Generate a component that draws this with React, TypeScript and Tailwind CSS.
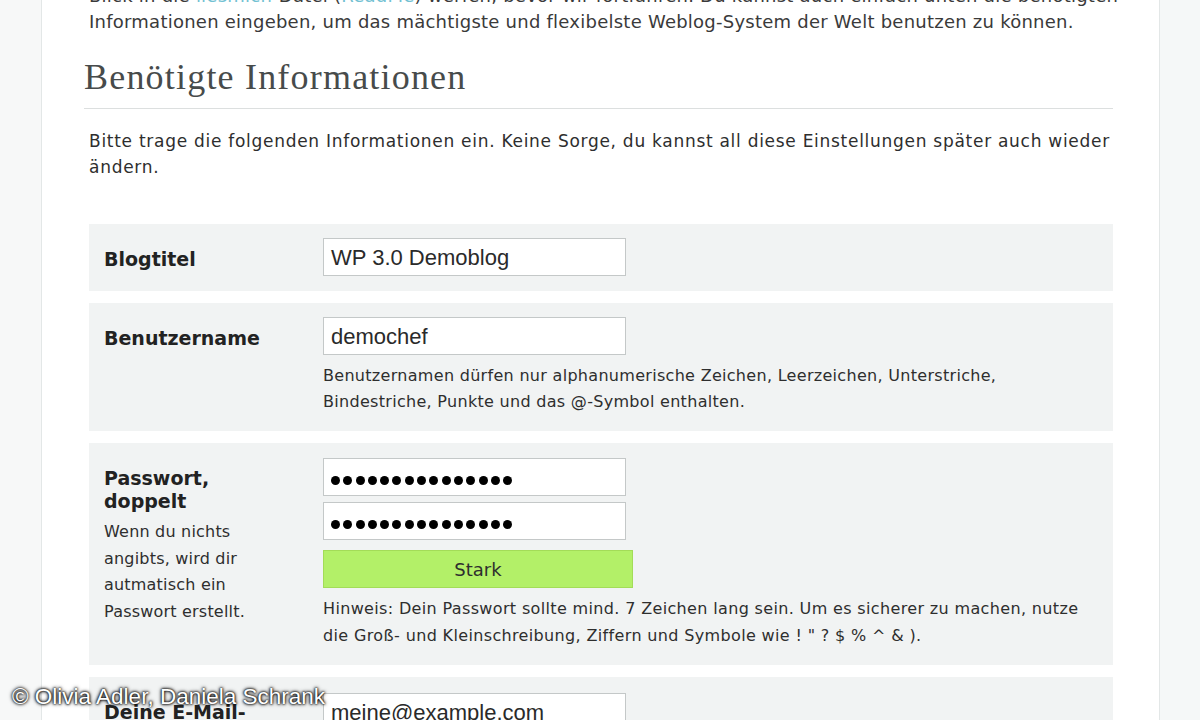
import React from "react";

const Dots = () => (
  <div className="flex items-center gap-[3.3px] pt-[6px]">
    {Array.from({ length: 15 }).map((_, i) => (
      <span key={i} className="block w-[9px] h-[9px] rounded-full bg-black" />
    ))}
  </div>
);

const Input = ({ children }: { children: React.ReactNode }) => (
  <div className="w-[303px] h-[38px] bg-white border border-[#c4c8c8] flex items-center pl-[7px] text-[22px] text-[#2a2a2a] font-['Liberation_Sans',Arial,sans-serif]">
    {children}
  </div>
);

const Label = ({ children }: { children: React.ReactNode }) => (
  <div className="text-[19px] leading-[23px] font-bold text-[#222]">{children}</div>
);

export default function App() {
  return (
    <div className="relative w-[1200px] h-[720px] overflow-hidden flex bg-[#f7f8f8] font-['DejaVu_Sans',Verdana,sans-serif] text-[#333]">
      <div className="w-[41px] shrink-0" />
      <div className="w-[1119px] shrink-0 bg-white border-x border-[#e3e7e7] pl-[42px] pr-[46px] overflow-hidden">
        <p className="mt-[-17px] pl-[5px] text-[18px] leading-[26px] text-[#3a3a3a] tracking-[0.24px] whitespace-nowrap">
          Blick in die <span className="text-[#72c1d2]">liesmich</span>-Datei (<span className="text-[#72c1d2]">ReadMe</span>) werfen, bevor wir fortfahren. Du kannst auch einfach unten die benötigten
          <br />
          Informationen eingeben, um das mächtigste und flexibelste Weblog-System der Welt benutzen zu können.
        </p>
        <h1 className="mt-[20px] pb-[9px] border-b border-[#dcdfdf] font-['Liberation_Serif',Georgia,serif] text-[36px] leading-[44px] tracking-[1.2px] text-[#474b4b]">
          Benötigte Informationen
        </h1>
        <p className="mt-[19px] pl-[5px] text-[17px] leading-[26px] tracking-[0.72px] text-[#2e2e2e]">
          Bitte trage die folgenden Informationen ein. Keine Sorge, du kannst all diese Einstellungen später auch wieder
          ändern.
        </p>
        <div className="mt-[44px] ml-[5px] flex flex-col gap-[12px]">
          {/* Blogtitel */}
          <div className="flex bg-[#f1f3f3]">
            <div className="w-[234px] shrink-0 pl-[15px] pr-[50px] pt-[24px]">
              <Label>Blogtitel</Label>
            </div>
            <div className="pt-[14px] pb-[15px]">
              <Input>WP 3.0 Demoblog</Input>
            </div>
          </div>
          {/* Benutzername */}
          <div className="flex bg-[#f1f3f3]">
            <div className="w-[234px] shrink-0 pl-[15px] pr-[50px] pt-[24px]">
              <Label>Benutzername</Label>
            </div>
            <div className="pt-[14px] pb-[16px] flex-1">
              <Input>demochef</Input>
              <p className="mt-[8px] text-[16px] leading-[26px] tracking-[0.3px] text-[#2e2e2e]">
                Benutzernamen dürfen nur alphanumerische Zeichen, Leerzeichen, Unterstriche,
                <br />
                Bindestriche, Punkte und das @-Symbol enthalten.
              </p>
            </div>
          </div>
          {/* Passwort */}
          <div className="flex bg-[#f1f3f3]">
            <div className="w-[234px] shrink-0 pl-[15px] pr-[50px] pt-[24px]">
              <Label>Passwort, doppelt</Label>
              <p className="mt-[6px] text-[16px] leading-[26.6px] tracking-[0.2px] text-[#2e2e2e]">
                Wenn du nichts angibts, wird dir autmatisch ein Passwort erstellt.
              </p>
            </div>
            <div className="pt-[15px] pb-[16px] flex-1">
              <Input>
                <Dots />
              </Input>
              <div className="mt-[6px]">
                <Input>
                  <Dots />
                </Input>
              </div>
              <div className="mt-[10px] w-[310px] h-[38px] bg-[#b3f068] border border-[#a3dc58] flex items-center justify-center text-[18px] text-[#2e2e2e]">
                Stark
              </div>
              <p className="mt-[7px] text-[16px] leading-[27px] tracking-[0.35px] text-[#2e2e2e]">
                Hinweis: Dein Passwort sollte mind. 7 Zeichen lang sein. Um es sicherer zu machen, nutze
                <br />
                die Groß- und Kleinschreibung, Ziffern und Symbole wie ! " ? $ % ^ &amp; ).
              </p>
            </div>
          </div>
          {/* E-Mail */}
          <div className="flex bg-[#f1f3f3]">
            <div className="w-[234px] shrink-0 pl-[15px] pr-[50px] pt-[24px]">
              <Label>Deine E-Mail-Adresse</Label>
            </div>
            <div className="pt-[16px] pb-[15px]">
              <Input>meine@example.com</Input>
            </div>
          </div>
        </div>
      </div>
      <div className="flex-1 bg-[#f5f8f8]" />
      <div className="absolute left-[12px] top-[683px] text-[22.5px] leading-[28px] text-white font-['Liberation_Sans',Arial,sans-serif] [text-shadow:0_0_2px_#000,0_0_3px_#000,0_0_4px_#333]">
        © Olivia Adler, Daniela Schrank
      </div>
    </div>
  );
}
